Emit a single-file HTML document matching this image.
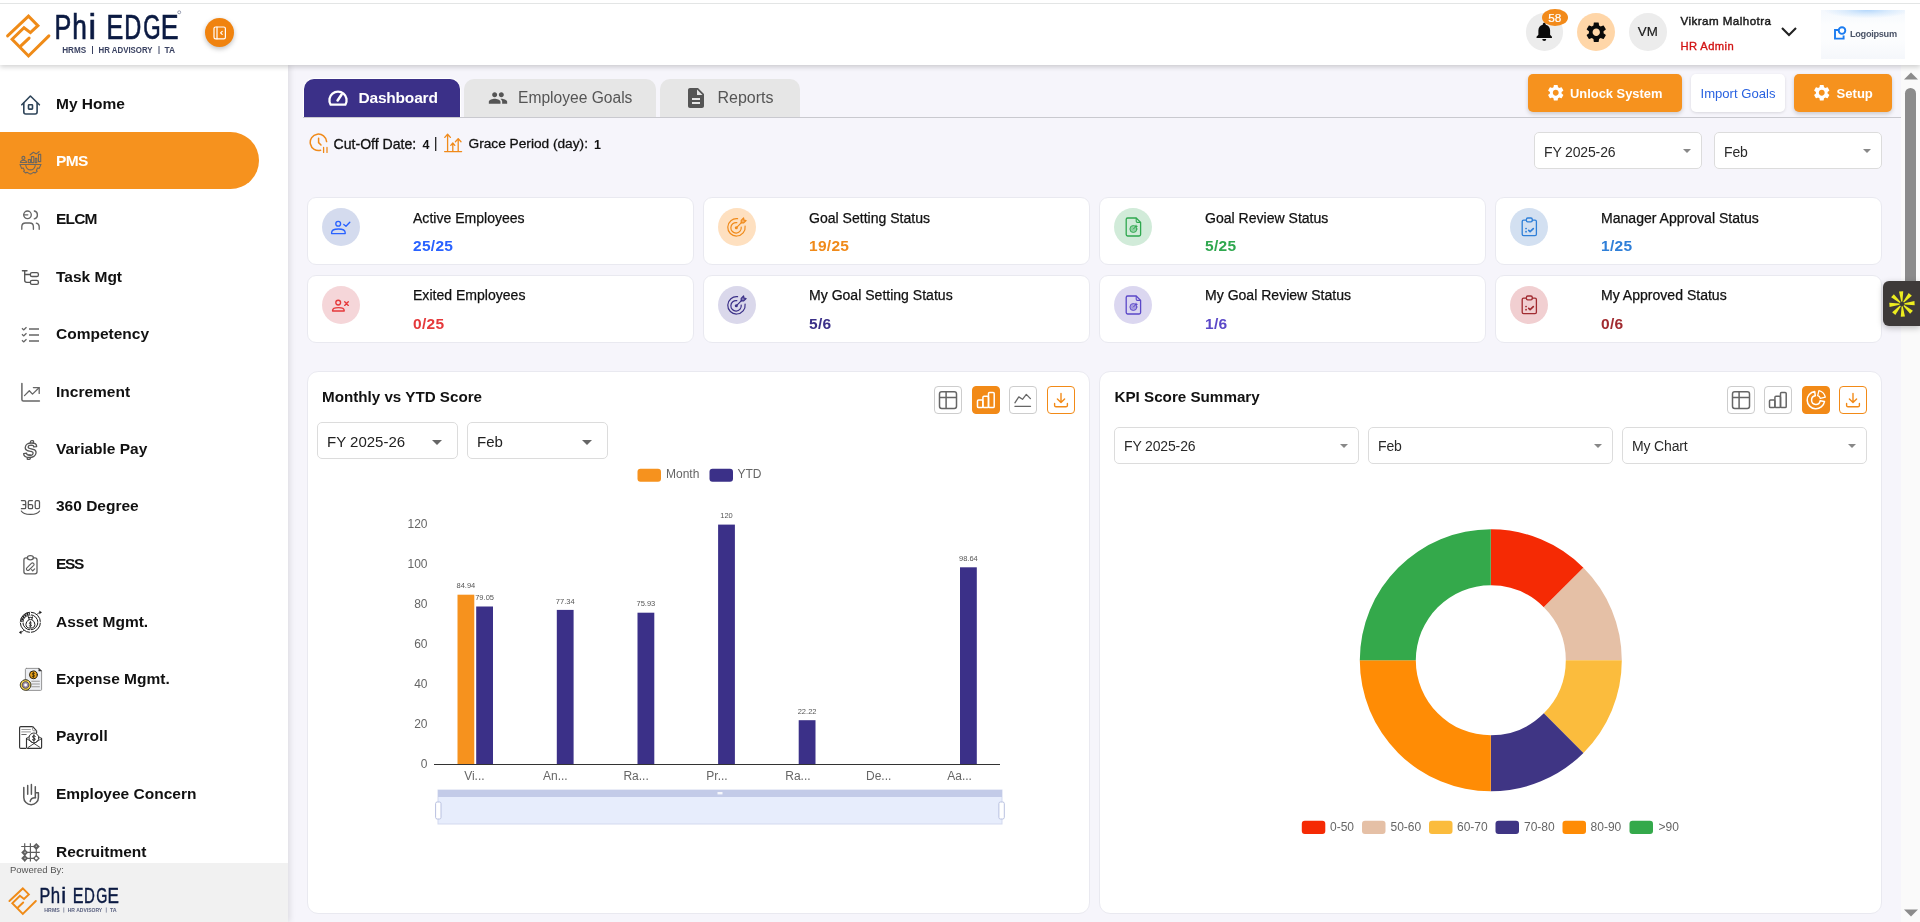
<!DOCTYPE html>
<html>
<head>
<meta charset="utf-8">
<title>PMS Dashboard</title>
<style>
*{box-sizing:border-box;margin:0;padding:0}
html,body{width:1920px;height:922px;overflow:hidden;background:#f6f5fb;font-family:"Liberation Sans",sans-serif;color:#111}
.abs{position:absolute}
#header,#sidebar,#main{will-change:transform}
#topline{position:absolute;left:0;top:3px;width:1920px;height:1px;background:#e3e5e5;z-index:30}
#header{position:absolute;left:0;top:0;width:1920px;height:65px;background:#fff;box-shadow:0 2px 5px rgba(0,0,0,.18);z-index:20}
#sidebar{position:absolute;left:0;top:65px;width:288px;height:857px;background:#fff;box-shadow:2px 0 6px rgba(0,0,0,.10);z-index:10;overflow:hidden}
.mi{position:absolute;left:0;width:288px;height:57px;font-weight:bold;font-size:15.5px;color:#111}
.mi span{position:absolute;left:56px;top:20px;line-height:18px;white-space:nowrap}
.mi svg{position:absolute;left:19px;top:17px;width:24px;height:24px}
.mi.act{background:#f6921e;width:259px;border-radius:0 29px 29px 0;color:#fff}
#powered{position:absolute;left:0;top:798px;width:288px;height:60px;background:#f1f1f1;z-index:5}
#main{position:absolute;left:0;top:0;width:1920px;height:922px;z-index:1}
.tab{position:absolute;top:79px;height:38px;border-radius:10px 10px 0 0;background:#e6e6e6;color:#555;font-size:16px;line-height:38px;white-space:nowrap}
.tab span{position:absolute;top:0}
.card{position:absolute;width:387px;height:68px;background:#fff;border:1px solid #e9e9f0;border-radius:9px}
.card .ic{position:absolute;left:13.6px;top:9.6px;width:38px;height:38px;border-radius:50%}
.card .ic svg{position:absolute;left:7px;top:7px;width:24px;height:24px}
.card.r1 .t{top:11px}
.card .t{position:absolute;left:105px;top:10px;font-size:14.05px;line-height:18px;color:#111;white-space:nowrap;-webkit-text-stroke:.25px #111}
.card .v{position:absolute;left:105px;top:39px;font-size:15.5px;letter-spacing:.3px;line-height:18px;font-weight:bold;white-space:nowrap}
.panel{position:absolute;top:371px;height:543px;background:#fff;border:1px solid #e9e9f0;border-radius:11px}
.ptitle{position:absolute;font-size:15.2px;font-weight:bold;color:#111;line-height:20px;white-space:nowrap}
.tb{position:absolute;width:28px;height:28px;border:1px solid #cdcdcd;border-radius:4px;background:#fff}
.tb svg{position:absolute;left:3px;top:3px;width:20px;height:20px}
.sel{position:absolute;height:36px;border:1px solid #dcdcdc;border-radius:5px;background:#fff;font-size:14px;letter-spacing:-.15px;line-height:34px;color:#2a2a2a;padding-left:9px;padding-top:.5px;white-space:nowrap}
.sel:after{content:"";position:absolute;right:10px;top:16px;border-left:4px solid transparent;border-right:4px solid transparent;border-top:4.5px solid #888}
.sel.s2{font-size:15px;color:#222;letter-spacing:0;padding-left:9px;padding-top:0}
.sel.s2:after{right:15px;top:16.500px;border-top-color:#666;border-left-width:5px;border-right-width:5px;border-top-width:5.5px}
.btn{position:absolute;top:74px;height:38px;border-radius:5px;background:#f6921e;color:#fff;font-size:12.9px;font-weight:bold;line-height:40px;white-space:nowrap;box-shadow:0 2px 4px rgba(0,0,0,.18)}
</style>
</head>
<body>
<div id="topline"></div>
<div id="header">

<svg class="abs" style="left:0;top:0" width="200" height="65" viewBox="0 0 200 65">
  <g fill="none" stroke="#ef8b18" stroke-width="3" stroke-linecap="round" stroke-linejoin="miter">
    <path d="M7.6 35.9 L28.5 16.2 L37.9 25.6 L30.4 32.6 L24 27.7 L12.1 39.3 L28.5 56 L48.9 35.9"/>
    <path d="M20.9 45.9 L29.1 38.1"/>
  </g>
  <g font-family="Liberation Sans, sans-serif" fill="#0b1a42">
    <g stroke="#0b1a42" stroke-width=".7">
    <text x="54.6" y="38.6" font-size="34.5" textLength="16.8" lengthAdjust="spacingAndGlyphs">P</text>
    <text x="72.2" y="38.6" font-size="34.5" textLength="14.6" lengthAdjust="spacingAndGlyphs">h</text>
    <text x="88.6" y="38.6" font-size="34.5" textLength="7.6" lengthAdjust="spacingAndGlyphs">i</text>
    <text x="106.6" y="38.6" font-size="34.5" textLength="16.8" lengthAdjust="spacingAndGlyphs">E</text>
    <text x="124.2" y="38.6" font-size="34.5" textLength="17" lengthAdjust="spacingAndGlyphs">D</text>
    <text x="143.2" y="38.6" font-size="34.5" textLength="17.4" lengthAdjust="spacingAndGlyphs">G</text>
    <text x="160.8" y="38.6" font-size="34.5" textLength="17.8" lengthAdjust="spacingAndGlyphs">E</text>
    </g>
    <g font-size="8.2" font-weight="bold" fill="#3a4262">
    <text x="62.2" y="52.8" textLength="24" lengthAdjust="spacingAndGlyphs">HRMS</text>
    <text x="98.6" y="52.8" textLength="54" lengthAdjust="spacingAndGlyphs">HR ADVISORY</text>
    <text x="164.6" y="52.8" textLength="10.6" lengthAdjust="spacingAndGlyphs">TA</text>
    </g>
    <path d="M92.5 46 V54 M159 46 V54" stroke="#3a4262" stroke-width="1" fill="none"/>
  </g>
  <circle cx="179.2" cy="12.3" r="1.5" fill="none" stroke="#3a4468" stroke-width=".5"/>
</svg>
<div class="abs" style="left:204.5px;top:17.5px;width:29px;height:29px;border-radius:50%;background:#f0830f;box-shadow:0 2px 5px rgba(0,0,0,.25)">
  <svg class="abs" style="left:0;top:0" width="29" height="29" viewBox="0 0 29 29" fill="none" stroke="#fff" stroke-width="1.2" stroke-linecap="round" stroke-linejoin="round">
    <rect x="9" y="9" width="11.4" height="11.8" rx="1.6"/>
    <path d="M12 9 V20.8"/>
    <path d="M17.2 13.4 L15.6 14.9 L17.2 16.4"/>
  </svg>
</div>
<!-- right side -->
<div class="abs" style="left:1525.8px;top:13.2px;width:37.5px;height:37.5px;border-radius:50%;background:#ececec">
  <svg class="abs" style="left:10.700px;top:9px" width="16.500" height="20.200" viewBox="0 0 18 22"><path fill="#0a0a0a" d="M9 0.8c-.9 0-1.6.7-1.6 1.6v.6C4.4 3.7 2.6 6.2 2.6 9.2v4.6L.6 16.2v1.2h16.8v-1.2l-2-2.4V9.2c0-3-1.8-5.5-4.8-6.2v-.6c0-.9-.7-1.6-1.6-1.6zM6.8 18.6a2.2 2.2 0 0 0 4.4 0z"/></svg>
</div>
<div class="abs" style="left:1541.8px;top:9px;width:26px;height:17px;border-radius:50%;background:#f28a1a;color:#fff;font-size:11.8px;line-height:19px;-webkit-text-stroke:.2px #fff;text-align:center">58</div>
<div class="abs" style="left:1577px;top:13px;width:38px;height:38px;border-radius:50%;background:#ffd6a8">
  <svg class="abs" style="left:6.75px;top:6.75px" width="24.5" height="24.5" viewBox="0 0 24 24"><path fill="#0a0a0a" d="M19.14 12.94c.04-.3.06-.61.06-.94 0-.32-.02-.64-.07-.94l2.03-1.58a.49.49 0 0 0 .12-.61l-1.92-3.32a.488.488 0 0 0-.59-.22l-2.39.96c-.5-.38-1.03-.7-1.62-.94l-.36-2.54a.484.484 0 0 0-.48-.41h-3.84c-.24 0-.43.17-.47.41l-.36 2.54c-.59.24-1.13.57-1.62.94l-2.39-.96c-.22-.08-.47 0-.59.22L2.74 8.87c-.12.21-.08.47.12.61l2.03 1.58c-.05.3-.09.63-.09.94s.02.64.07.94l-2.03 1.58a.49.49 0 0 0-.12.61l1.92 3.32c.12.22.37.29.59.22l2.39-.96c.5.38 1.03.7 1.62.94l.36 2.54c.05.24.24.41.48.41h3.84c.24 0 .44-.17.47-.41l.36-2.54c.59-.24 1.13-.56 1.62-.94l2.39.96c.22.08.47 0 .59-.22l1.92-3.32c.12-.22.07-.47-.12-.61l-2.01-1.58zM12 15.6c-1.98 0-3.6-1.62-3.6-3.6s1.620-3.6 3.600-3.6 3.600 1.620 3.600 3.600-1.620 3.600-3.600 3.600z"/></svg>
</div>
<div class="abs" style="left:1629px;top:13px;width:37.500px;height:37.500px;border-radius:50%;background:#ececec;color:#1c1c1c;font-size:13.3px;line-height:37.500px;-webkit-text-stroke:.2px #1c1c1c;text-align:center">VM</div>
<div class="abs nm" style="left:1680.5px;top:12.5px;font-size:11.6px;line-height:16px;color:#1a1a1a;white-space:nowrap;letter-spacing:.45px;-webkit-text-stroke:.45px #1a1a1a">Vikram Malhotra</div>
<div class="abs nm" style="left:1680.5px;top:37.5px;font-size:11.2px;line-height:16px;color:#d21414;white-space:nowrap;-webkit-text-stroke:.35px #d21414;letter-spacing:.4px">HR Admin</div>
<svg class="abs" style="left:1780px;top:25px" width="18" height="14" viewBox="0 0 18 14" fill="none" stroke="#222" stroke-width="2.1"><path d="M2 3 L9 10 L16 3"/></svg>
<div class="abs" style="left:1821px;top:10px;width:84px;height:49px;background:radial-gradient(ellipse 52% 17% at 55% 0%,#b4d7fb 0%,rgba(200,226,252,.6) 50%,rgba(240,247,254,0) 100%),linear-gradient(180deg,#f4f8fd 0%,#fcfdfe 30%,#fcfdfe 60%,#f5f7fb 100%)">
  <svg class="abs" style="left:12px;top:16px" width="14" height="15" viewBox="0 0 14 15" fill="none" stroke="#1b7cf0" stroke-width="1.9"><path d="M5.500 4 H2 V12.600 H10.600 V9.600"/><circle cx="9" cy="4.600" r="3.300" fill="#fff"/></svg>
  <div class="abs" style="left:29px;top:17.500px;font-size:9.2px;font-weight:bold;color:#4b5468;line-height:12px;letter-spacing:-.3px">Logoipsum</div>
</div>

</div>
<div id="sidebar">
<div class="mi" style="top:9.5px"><span>My Home</span></div>
<div class="mi act" style="top:67.0px"><span style="letter-spacing:-.6px">PMS</span></div>
<div class="mi" style="top:124.5px"><span style="letter-spacing:-.8px">ELCM</span></div>
<div class="mi" style="top:182.0px"><span style="top:21px">Task Mgt</span></div>
<div class="mi" style="top:239.5px"><span>Competency</span></div>
<div class="mi" style="top:297.0px"><span style="top:21px">Increment</span></div>
<div class="mi" style="top:354.5px"><span>Variable Pay</span></div>
<div class="mi" style="top:412.0px"><span>360 Degree</span></div>
<div class="mi" style="top:469.5px"><span style="letter-spacing:-1.3px">ESS</span></div>
<div class="mi" style="top:527.0px"><span style="top:21px">Asset Mgmt.</span></div>
<div class="mi" style="top:584.5px"><span>Expense Mgmt.</span></div>
<div class="mi" style="top:642.0px"><span>Payroll</span></div>
<div class="mi" style="top:699.5px"><span>Employee Concern</span></div>
<div class="mi" style="top:757.0px"><span style="top:21px">Recruitment</span></div>

<svg class="abs" style="left:0;top:0;z-index:3" width="60" height="857" viewBox="0 65 60 857" fill="none" stroke-linecap="round" stroke-linejoin="round">
<!-- home -->
<g stroke="#2e4459" stroke-width="1.6">
  <path d="M21.8 104.8 L30.4 96 L39.4 104.8"/>
  <path d="M23.8 103 V112 Q23.8 114 25.8 114 H35.1 Q37.1 114 37.1 112 V103"/>
  <rect x="28.5" y="104.7" width="4" height="4.4" rx=".6"/>
</g>
<!-- pms -->
<g stroke="#6d675f" stroke-width="1.1">
  <path d="M20 164.5 H41"/>
  <path d="M20.3 165.2 L21.6 168.4 L23.3 168 L24.4 170.4 L23.6 171.4 L25.8 173 L27 172.2 L29 173.4 L30.4 174 L31.8 173.4 L33.8 172.2 L35 173 L37.2 171.4 L36.4 170.4 L37.5 168 L39.2 168.4 L40.6 165.2"/>
  <path d="M25.8 165.2 A4.7 4.7 0 0 0 35.2 165.2"/>
  <circle cx="23.4" cy="157.9" r="1.5"/>
  <path d="M20.4 162.5 Q20.6 160.2 23.4 160.2 Q26.4 160.2 26.6 162.5 Z"/>
  <rect x="28.3" y="159.6" width="2.2" height="3"/>
  <rect x="31.4" y="156.6" width="2.4" height="6"/>
  <rect x="35.2" y="158.4" width="1.6" height="4.2"/>
  <rect x="38.5" y="154.4" width="2.2" height="7.2"/>
  <path d="M30 155 L33.4 152.3 L36.3 153.9 L39.1 151.7"/>
</g>
<!-- elcm -->
<g stroke="#666" stroke-width="1.35">
  <circle cx="27.5" cy="214.8" r="3.8"/>
  <path d="M23.7 214.8 H27.8"/>
  <path d="M34.3 211 A4 4 0 0 1 34.3 218.8"/>
  <path d="M21.8 229.2 V226.8 Q21.8 223 25.6 223 H29.6 Q33.4 223 33.4 226.8 V229.2"/>
  <path d="M36.3 223.1 Q39.2 223.8 39.2 226.8 V229.2"/>
</g>
<!-- task -->
<g stroke="#555" stroke-width="1.35">
  <path d="M22.4 270.7 H27"/>
  <path d="M24.7 270.7 V280.2 Q24.7 282.3 26.8 282.3 H30.3"/>
  <path d="M24.7 274.5 H30.3"/>
  <rect x="30.4" y="272.6" width="8" height="3.9" rx="1.6"/>
  <rect x="30.4" y="280.4" width="8" height="3.9" rx="1.6"/>
</g>
<!-- competency -->
<g stroke="#666" stroke-width="1.5" stroke-linecap="butt">
  <path d="M29 329 H39 M29 335 H39 M29 341 H39"/>
  <path d="M22 328.2 L23.6 329.9 L26.5 327.2 M22 334.2 L23.6 335.9 L26.5 333.2 M22 340.2 L23.6 341.9 L26.5 339.2" stroke-width="1.3"/>
</g>
<!-- increment -->
<g stroke="#666" stroke-width="1.5">
  <path d="M21.9 383.6 V399.6 Q21.9 401.1 23.4 401.1 H39.4"/>
  <path d="M24.5 395.6 L29.3 390.7 L32.5 394.1 L39 387.8" stroke-width="1.3"/>
  <path d="M33.4 387.6 H39.2 V393.4" stroke-width="1.3"/>
</g>
<!-- variable pay -->
<g transform="translate(30.4 450) skewX(-9) translate(-30.4 -450)" stroke="#555" stroke-width="1.3" fill="#fff" stroke-linejoin="round">
 <rect x="29.2" y="440.6" width="3" height="4.400" rx=".9"/>
 <rect x="28.600" y="455" width="3" height="4.400" rx=".9"/>
 <path transform="translate(23.6 457.3) scale(0.010010 -0.010010)" stroke-width="129.9" d="M1286 406Q1286 199 1132.5 89.5Q979 -20 682 -20Q411 -20 257.0 76.0Q103 172 59 367L344 414Q373 302 457.0 251.5Q541 201 690 201Q999 201 999 389Q999 449 963.5 488.0Q928 527 863.5 553.0Q799 579 616 616Q458 653 396.0 675.5Q334 698 284.0 728.5Q234 759 199.0 802.0Q164 845 144.5 903.0Q125 961 125 1036Q125 1227 268.5 1328.5Q412 1430 686 1430Q948 1430 1079.5 1348.0Q1211 1266 1249 1077L963 1038Q941 1129 873.5 1175.0Q806 1221 680 1221Q412 1221 412 1053Q412 998 440.5 963.0Q469 928 525.0 903.5Q581 879 752 842Q955 799 1042.5 762.5Q1130 726 1181.0 677.5Q1232 629 1259.0 561.5Q1286 494 1286 406Z"/>
</g>
<!-- 360 -->
<g stroke="#555" stroke-width="1.25">
  <path d="M21.4 500.6 H24.4 Q25.7 500.6 25.7 501.9 V507.4 Q25.7 508.7 24.4 508.7 H21.4 M23 504.5 H25.7"/>
  <path d="M32.4 500.6 H29.6 Q28.3 500.6 28.3 501.9 V507.4 Q28.3 508.7 29.6 508.7 H31.3 Q32.6 508.7 32.6 507.4 V505.6 Q32.6 504.5 31.3 504.5 H28.3"/>
  <rect x="35.2" y="500.6" width="4.3" height="8.1" rx="1.5"/>
  <path d="M21.3 511 Q23 514.4 30.4 514.4 Q37.8 514.4 39.6 511" stroke-width="1.1"/>
</g>
<!-- ess -->
<g stroke="#5e5e5e" stroke-width="1.3">
  <path d="M27.4 557.9 H26 Q23.9 557.9 23.9 560 V571.8 Q23.9 573.9 26 573.9 H34.9 Q37 573.9 37 571.8 V560 Q37 557.9 34.9 557.9 H33.4"/>
  <ellipse cx="30.4" cy="557.8" rx="3" ry="2.1"/>
  <path d="M26.9 567.9 L31.6 563.2 A1.5 1.5 0 0 1 33.7 565.3 L29 570 Q28 571 26.9 570 Q25.9 569 26.9 567.9 Z" stroke-width="1.1"/>
  <path d="M31.6 569.7 L32.6 571 L34.7 568.8" stroke-width="1.1"/>
</g>
<!-- asset -->
<g stroke="#1c1c1c" stroke-width="1">
  <circle cx="30.4" cy="622.3" r="10.1"/>
  <circle cx="30.4" cy="622.3" r="7.5"/>
  <path d="M21.6 622.2 A8.8 8.8 0 0 1 30.2 613.500" stroke-width="2" stroke-linecap="butt" stroke-dasharray="1.700 .7"/>
  <path d="M30.4 611.600 V615.200 M30.4 629.400 V633 M19.800 622.300 H23.300 M37.500 622.300 H41" stroke="#fff" stroke-width="1.100" stroke-linecap="butt"/>
  <path d="M28.300 616.700 L29.400 618 L30.400 616.900 L31.400 618 L32.500 616.700 L31.800 619.600 Q34.900 621.400 34.900 624.400 Q34.900 628.100 30.400 628.100 Q25.900 628.100 25.900 624.400 Q25.900 621.400 29 619.600 Z" fill="#fff"/>
  <path d="M29 619.700 H31.800" stroke-width=".8"/>
  <path d="M37 614.400 Q38 612.600 40.200 612.400 M23.800 630.400 Q22.800 632.200 20.600 632.400" stroke-width=".8"/>
  <path d="M39.800 611.200 L41.600 612.400 L39.800 613.600 Z M21 631.200 L19.200 632.400 L21 633.600 Z" fill="#1c1c1c" stroke-width=".5"/>
  <path d="M31.500 622.900 Q30.400 621.900 29.400 622.800 Q28.900 623.800 30.400 624.300 Q31.900 624.800 31.400 625.800 Q30.400 626.800 29.200 625.800 M30.400 621.400 V627.300" stroke-width=".8" fill="none"/>
</g>
<!-- expense -->
<g stroke-width=".9">
  <path d="M26.4 668.4 H39 L41.6 671 V689.4 Q41.6 690.4 40.6 690.4 H26.4 Q25.4 690.4 25.4 689.4 V669.4 Q25.4 668.4 26.4 668.4 Z" fill="#eceef2" stroke="#8a8a8a"/>
  <path d="M39 668.4 L41.6 671 H39 Z" fill="#333" stroke="#333" stroke-width=".5"/>
  <path d="M31.4 681.3 H39.8 M31.4 684 H39.8 M31.4 686.8 H39.8" stroke="#9a9a9a" stroke-width="1.1" stroke-linecap="butt"/>
  <circle cx="33.4" cy="674.8" r="3.9" fill="#e9a21b" stroke="#2a2110" stroke-width="1"/>
  <circle cx="25.6" cy="685" r="5.3" fill="#f3d44f" stroke="#2b2614" stroke-width="1" stroke-dasharray="2.2 .9"/>
  <circle cx="25.6" cy="685" r="3.3" fill="#9c8ea6" stroke="#3a3340" stroke-width=".8" stroke-dasharray="1.6 .8"/>
  <circle cx="25.6" cy="685" r="1.4" fill="#fff" stroke="none"/>
</g>
<path d="M34.500 673.500 Q33.400 672.600 32.400 673.400 Q31.900 674.400 33.400 674.900 Q34.900 675.400 34.400 676.300 Q33.400 677.200 32.200 676.300 M33.400 672.200 V677.500" stroke="#3a2a08" stroke-width=".9" fill="none"/>
<!-- payroll -->
<g stroke="#333" stroke-width="1.15">
  <path d="M25.6 748.4 H20.8 Q19.6 748.4 19.6 747.2 V727.8 Q19.6 726.6 20.8 726.6 H32.8 L36.6 730.8 V733"/>
  <path d="M32.6 726.8 V729.6 Q32.6 730.8 33.8 730.8 H36.4" stroke-width=".9" stroke="#888"/>
  <path d="M21.8 729.5 H30.4" stroke="#888" stroke-width=".8"/>
  <path d="M21.8 731.9 H30.4" stroke="#aaa" stroke-width="1.3"/>
  <path d="M21.8 734.5 H26.2" stroke="#555" stroke-width=".9"/>
  <path d="M26.5 738.4 V747.2 Q26.5 748.4 27.7 748.4 H40.4 Q41.6 748.4 41.6 747.2 V738.4" />
  <circle cx="33.9" cy="737.9" r="4.9" stroke-width="1"/>
  <path d="M26.6 738.6 L40 747.4 M41.5 738.6 L28.2 747.4" stroke-width=".9"/>
  <path d="M26.5 738.4 L29 736.8 M41.6 738.4 L38.9 736.8" stroke-width=".9"/>
</g>
<path d="M35.300 736.300 Q33.900 735.200 32.700 736.200 Q32.100 737.400 33.900 738 Q35.700 738.600 35.100 739.800 Q33.900 740.900 32.400 739.800 M33.900 734.700 V741.300" stroke="#222" stroke-width="1" fill="none"/>
<!-- hand -->
<g stroke="#5a5a5a" stroke-width="1.5">
  <path d="M23.8 787.6 V797.4 A7.3 7.3 0 0 0 38.4 797.4 V792.8 H36"/>
  <path d="M27.7 785.6 V794.2 M31.4 784.6 V794.2 M35.3 786.7 V797.6"/>
  <path d="M35.6 797.8 Q30.8 797.6 30.2 801.4"/>
</g>
<!-- recruitment -->
<g stroke="#5e5e5e" stroke-width="1.2" stroke-linecap="butt">
  <path d="M21.2 846.5 H36 M24.7 852.4 H39.8 M24.7 858.3 H36.3"/>
  <path d="M24.7 843.2 V861.6 M30.4 843.2 V861.6 M36.3 846.5 V858.3"/>
  <g fill="#5e5e5e" stroke="none">
    <path d="M36.3 843 L39.8 846.5 L36.3 850 L32.8 846.5 Z"/>
    <path d="M24.7 848.9 L28.2 852.4 L24.7 855.9 L21.2 852.4 Z"/>
    <path d="M24.7 854.8 L28.2 858.3 L24.7 861.8 L21.2 858.3 Z"/>
    <path d="M36.3 854.8 L39.8 858.3 L36.3 861.8 L32.8 858.3 Z"/>
  </g>
  <circle cx="36.3" cy="858.3" r="1.3" fill="#fff" stroke="none"/>
  <circle cx="36.3" cy="846.3" r=".8" fill="#bbb" stroke="none"/>
  <circle cx="25" cy="852.4" r=".8" fill="#bbb" stroke="none"/>
  <circle cx="25" cy="858.3" r=".8" fill="#bbb" stroke="none"/>
</g>
</svg>

<div id="powered">
  <div class="abs" style="left:10px;top:.5px;font-size:9.5px;line-height:12px;color:#555">Powered By:</div>
  <svg class="abs" style="left:0;top:0" width="140" height="60" viewBox="0 0 140 60">
  <g transform="translate(4.56 15.06) scale(.64)">
  <g fill="none" stroke="#ef8b18" stroke-width="3" stroke-linecap="round" stroke-linejoin="miter">
    <path d="M7.6 35.9 L28.5 16.2 L37.9 25.6 L30.4 32.6 L24 27.7 L12.1 39.3 L28.5 56 L48.9 35.9"/>
    <path d="M20.9 45.9 L29.1 38.1"/>
  </g>
  <g font-family="Liberation Sans, sans-serif" fill="#0b1a42">
    <g stroke="#0b1a42" stroke-width=".7">
    <text x="54.6" y="38.6" font-size="34.5" textLength="16.8" lengthAdjust="spacingAndGlyphs">P</text>
    <text x="72.2" y="38.6" font-size="34.5" textLength="14.6" lengthAdjust="spacingAndGlyphs">h</text>
    <text x="88.6" y="38.6" font-size="34.5" textLength="7.6" lengthAdjust="spacingAndGlyphs">i</text>
    <text x="106.6" y="38.6" font-size="34.5" textLength="16.8" lengthAdjust="spacingAndGlyphs">E</text>
    <text x="124.2" y="38.6" font-size="34.5" textLength="17" lengthAdjust="spacingAndGlyphs">D</text>
    <text x="143.2" y="38.6" font-size="34.5" textLength="17.4" lengthAdjust="spacingAndGlyphs">G</text>
    <text x="160.8" y="38.6" font-size="34.5" textLength="17.8" lengthAdjust="spacingAndGlyphs">E</text>
    </g>
    <g font-size="8.2" font-weight="bold" fill="#5a6180">
    <text x="62.2" y="52.8" textLength="24" lengthAdjust="spacingAndGlyphs">HRMS</text>
    <text x="98.6" y="52.8" textLength="54" lengthAdjust="spacingAndGlyphs">HR ADVISORY</text>
    <text x="164.6" y="52.8" textLength="10.6" lengthAdjust="spacingAndGlyphs">TA</text>
    </g>
    <path d="M92.5 46 V54 M159 46 V54" stroke="#5a6180" stroke-width="1" fill="none"/>
  </g>
  </g>
  </svg>
</div>

</div>
<div id="main">

<!-- tabs -->
<div class="abs" style="left:303px;top:117px;width:1598px;height:1px;background:#c9c9cf"></div>
<div class="tab" style="left:303px;top:78px;width:158px;height:39px;border:1px solid #fff;border-bottom:none;border-radius:11px 11px 0 0;background:#3b3088;color:#fff;font-weight:bold">
  <svg class="abs" style="left:23px;top:10px" width="22" height="18" viewBox="0 0 22 18" fill="none" stroke="#fff" stroke-width="2.3" stroke-linecap="round"><path d="M3.6 15.6 A8.6 8.6 0 1 1 18.4 15.6 Z" stroke-linejoin="round"/><path d="M10.6 11.4 L14.6 5.6" stroke-width="2.6"/></svg>
  <span style="left:54.5px;font-size:15.5px;letter-spacing:-.2px">Dashboard</span>
</div>
<div class="tab" style="left:464px;width:192px">
  <svg class="abs" style="left:22px;top:9px" width="24" height="20" viewBox="0 0 24 24"><path fill="#555" d="M16 11c1.660 0 2.990-1.340 2.990-3S17.660 5 16 5c-1.660 0-3 1.340-3 3s1.340 3 3 3zm-8 0c1.660 0 2.990-1.340 2.990-3S9.660 5 8 5C6.340 5 5 6.340 5 8s1.340 3 3 3zm0 2c-2.330 0-7 1.170-7 3.500V19h14v-2.500c0-2.330-4.670-3.500-7-3.500zm8 0c-.29 0-.62.020-.97.050 1.160.84 1.970 1.970 1.970 3.450V19h6v-2.500c0-2.330-4.670-3.500-7-3.500z"/></svg>
  <span style="left:54px;font-size:15.6px">Employee Goals</span>
</div>
<div class="tab" style="left:660px;width:140px">
  <svg class="abs" style="left:24px;top:7px" width="24" height="24" viewBox="0 0 24 24"><path fill="#555" d="M14 2H6c-1.100 0-1.990.900-1.990 2L4 20c0 1.100.890 2 1.990 2H18c1.100 0 2-.900 2-2V8l-6-6zm2 16H8v-2h8v2zm0-4H8v-2h8v2zm-3-5V3.500L18.500 9H13z"/></svg>
  <span style="left:57.5px">Reports</span>
</div>
<!-- buttons -->
<div class="btn" style="left:1528px;width:154px">
  <svg class="abs" style="left:17.5px;top:9px" width="19.500" height="19.500" viewBox="0 0 24 24"><path fill="#fff" d="M19.14 12.94c.04-.3.06-.61.06-.94 0-.32-.02-.64-.07-.94l2.03-1.58a.49.49 0 0 0 .12-.61l-1.92-3.32a.488.488 0 0 0-.59-.22l-2.39.96c-.5-.38-1.03-.7-1.62-.94l-.36-2.54a.484.484 0 0 0-.48-.41h-3.84c-.24 0-.43.17-.47.41l-.36 2.54c-.59.24-1.13.57-1.620.94l-2.39-.96c-.22-.08-.47 0-.59.22L2.740 8.870c-.12.21-.08.47.12.61l2.030 1.580c-.05.3-.09.63-.09.94s.02.64.07.94l-2.030 1.580a.49.49 0 0 0-.12.610l1.920 3.320c.12.220.37.290.59.220l2.390-.96c.5.380 1.030.700 1.620.940l.36 2.540c.05.240.24.410.48.410h3.840c.24 0 .44-.17.47-.41l.36-2.540c.59-.24 1.130-.56 1.620-.94l2.390.96c.22.080.47 0 .59-.22l1.920-3.320c.12-.22.070-.47-.12-.61l-2.010-1.580zM12 15.600c-1.980 0-3.600-1.620-3.600-3.600s1.620-3.600 3.600-3.600 3.600 1.620 3.600 3.600-1.620 3.600-3.600 3.600z"/></svg>
  <span class="abs" style="left:42px;top:0">Unlock System</span>
</div>
<div class="btn" style="left:1691px;width:94px;background:#fff;color:#2962e0;font-weight:normal;font-size:13.1px;box-shadow:0 1px 3px rgba(0,0,0,.12)"><span class="abs" style="left:9.5px;top:0">Import Goals</span></div>
<div class="btn" style="left:1794px;width:98px">
  <svg class="abs" style="left:17.5px;top:9px" width="19.500" height="19.500" viewBox="0 0 24 24"><path fill="#fff" d="M19.14 12.94c.04-.3.06-.61.06-.94 0-.32-.02-.64-.07-.94l2.03-1.58a.49.49 0 0 0 .12-.61l-1.92-3.32a.488.488 0 0 0-.59-.22l-2.39.96c-.5-.38-1.03-.7-1.62-.94l-.36-2.54a.484.484 0 0 0-.48-.41h-3.84c-.24 0-.43.17-.47.41l-.36 2.54c-.59.24-1.13.57-1.620.94l-2.39-.96c-.22-.08-.47 0-.59.22L2.740 8.870c-.12.21-.08.47.12.61l2.030 1.580c-.05.3-.09.63-.09.94s.02.64.07.94l-2.030 1.580a.49.49 0 0 0-.12.610l1.920 3.320c.12.220.37.290.59.220l2.390-.96c.5.380 1.030.700 1.620.940l.36 2.540c.05.240.24.410.48.410h3.840c.24 0 .44-.17.47-.41l.36-2.540c.59-.24 1.130-.56 1.620-.94l2.390.96c.22.080.47 0 .59-.22l1.920-3.320c.12-.22.070-.47-.12-.61l-2.010-1.580zM12 15.600c-1.980 0-3.600-1.620-3.600-3.600s1.620-3.600 3.600-3.600 3.600 1.620 3.600 3.600-1.620 3.600-3.600 3.600z"/></svg>
  <span class="abs" style="left:42.5px;top:0;font-size:13.1px">Setup</span>
</div>
<!-- cutoff line -->
<svg class="abs" style="left:308.500px;top:132.500px" width="22" height="22" viewBox="0 0 22 22" fill="none" stroke="#f08a1a" stroke-width="1.5" stroke-linecap="round"><path d="M11.6 17.2 A8.2 8.2 0 1 1 17.6 8.6"/><path d="M9.6 5.2 V9.6 L12 12"/><path d="M14.6 14.4 V19.4 M18 14.4 V19.4" stroke-width="1.3"/></svg>
<div class="abs" style="left:333.5px;top:135px;font-size:14.1px;line-height:18px;color:#111;white-space:nowrap;-webkit-text-stroke:.3px #111">Cut-Off Date:</div>
<div class="abs" style="left:422.500px;top:135.500px;font-size:12.5px;line-height:18px;font-weight:bold;color:#111">4</div>
<div class="abs" style="left:433.7px;top:133.5px;font-size:15px;line-height:18px;color:#111">|</div>
<svg class="abs" style="left:443px;top:131.700px" width="20" height="21" viewBox="0 0 20 21" fill="none" stroke="#f08a1a" stroke-width="1.3" stroke-linecap="round" stroke-linejoin="round"><path d="M1.6 19.6 H18.6"/><path d="M4.6 19.4 V2.4 M1.8 5.4 L4.6 2.2 L7.4 5.4"/><path d="M9.8 19.4 V11.2 M7.8 13.4 L9.8 11 L11.8 13.4"/><path d="M15.2 19.4 V6.8 M12.4 9.8 L15.2 6.6 L18 9.8"/></svg>
<div class="abs" style="left:468.5px;top:135px;font-size:13.7px;line-height:18px;color:#111;white-space:nowrap;-webkit-text-stroke:.3px #111">Grace Period (day):</div>
<div class="abs" style="left:594px;top:135.500px;font-size:12.5px;line-height:18px;font-weight:bold;color:#111">1</div>
<!-- top selects -->
<div class="sel" style="left:1534px;top:132px;width:168px;height:37px;line-height:36px">FY 2025-26</div>
<div class="sel" style="left:1714px;top:132px;width:168px;height:37px;line-height:36px">Feb</div>
<div class="card r1" style="left:307px;top:197px"><div class="ic" style="background:#d4dbee"><svg viewBox="0 0 24 24"><g fill="none" stroke="#2962ff" stroke-width="1.35" stroke-linecap="round" stroke-linejoin="round"><circle cx="9.2" cy="8.7" r="2.4"/><path d="M2.6 18.6 V17.8 Q2.6 14 9.4 14 Q16.2 14 16.2 17.8 V18.6 Z"/><path d="M14.8 9.4 L17 11.3 L20.8 7.2"/></g></svg></div><div class="t">Active Employees</div><div class="v" style="color:#2962ff">25/25</div></div>
<div class="card r1" style="left:703px;top:197px"><div class="ic" style="background:#fee0c0"><svg viewBox="0 0 24 24"><g fill="none" stroke="#f08a1a" stroke-width="1.2" stroke-linecap="round" stroke-linejoin="round"><path d="M12.600 3.700 A8.700 8.700 0 1 0 20.100 11.200"/><path d="M11.800 7.700 A5.200 5.200 0 1 0 16.200 12.100"/><circle cx="11.300" cy="12.800" r="1.500" fill="#f08a1a" stroke="none"/><path d="M11.300 12.800 L16.400 7.700"/><path d="M16.200 7.900 V5.400 L18.600 3 L19 5.100 L21.100 5.500 L18.700 7.900 Z" fill="#f08a1a" fill-opacity=".55"/></g></svg></div><div class="t">Goal Setting Status</div><div class="v" style="color:#f08a1a">19/25</div></div>
<div class="card r1" style="left:1099px;top:197px"><div class="ic" style="background:#d1ebd9"><svg viewBox="0 0 24 24"><g fill="none" stroke="#2fa84f" stroke-width="1.3" stroke-linecap="round" stroke-linejoin="round"><path d="M6.600 3 H15.200 L19.600 7.400 V19.600 Q19.600 21 18.200 21 H6.600 Q5.200 21 5.200 19.600 V4.400 Q5.200 3 6.600 3 Z"/><path d="M15.200 3.200 V6.200 Q15.200 7.400 16.400 7.400 H19.400" stroke-width="1.100"/><circle cx="12.400" cy="14" r="3.500" fill="#2fa84f" fill-opacity=".4" stroke-width=".9"/><path d="M12.400 14 L15 11.400 M15 11.400 V10.200 M15 11.400 H16.200" stroke-width="1"/></g></svg></div><div class="t">Goal Review Status</div><div class="v" style="color:#2fa84f">5/25</div></div>
<div class="card r1" style="left:1495px;top:197px"><div class="ic" style="background:#d3e0f1"><svg viewBox="0 0 24 24"><g fill="none" stroke="#2f7fd8" stroke-width="1.3" stroke-linecap="round" stroke-linejoin="round"><path d="M9.400 5.200 H6.600 Q5.200 5.200 5.200 6.600 V19.200 Q5.200 20.600 6.600 20.600 H18 Q19.400 20.600 19.400 19.200 V6.600 Q19.400 5.200 18 5.200 H15.300"/><rect x="9.400" y="3" width="5.900" height="3.800" rx="1.400"/><path d="M9 13.500 H9.100 M9 16.700 H9.100" stroke-width="1.700"/><path d="M11.700 15.300 L13.100 16.600 L16.300 13.600" stroke-width="1.700"/></g></svg></div><div class="t">Manager Approval Status</div><div class="v" style="color:#2f7fd8">1/25</div></div>
<div class="card" style="left:307px;top:275px"><div class="ic" style="background:#f5d6d9"><svg viewBox="0 0 24 24"><g fill="none" stroke="#e5393b" stroke-width="1.35" stroke-linecap="round" stroke-linejoin="round"><circle cx="9.2" cy="9.6" r="2.400"/><path d="M3.600 18 V17.400 Q3.600 14.600 9.400 14.600 Q15.200 14.600 15.200 17.400 V18 Z"/><path d="M15.700 8.800 L19.300 12.400 M19.300 8.800 L15.700 12.400"/></g></svg></div><div class="t">Exited Employees</div><div class="v" style="color:#e5393b">0/25</div></div>
<div class="card" style="left:703px;top:275px"><div class="ic" style="background:#dad8eb"><svg viewBox="0 0 24 24"><g fill="none" stroke="#3b3088" stroke-width="1.2" stroke-linecap="round" stroke-linejoin="round"><path d="M12.600 3.700 A8.700 8.700 0 1 0 20.100 11.200"/><path d="M11.800 7.700 A5.200 5.200 0 1 0 16.200 12.100"/><circle cx="11.300" cy="12.800" r="1.500" fill="#3b3088" stroke="none"/><path d="M11.300 12.800 L16.400 7.700"/><path d="M16.200 7.900 V5.400 L18.600 3 L19 5.100 L21.100 5.500 L18.700 7.900 Z" fill="#3b3088" fill-opacity=".55"/></g></svg></div><div class="t">My Goal Setting Status</div><div class="v" style="color:#3b3088">5/6</div></div>
<div class="card" style="left:1099px;top:275px"><div class="ic" style="background:#dbd7f0"><svg viewBox="0 0 24 24"><g fill="none" stroke="#5b48c8" stroke-width="1.3" stroke-linecap="round" stroke-linejoin="round"><path d="M6.600 3 H15.200 L19.600 7.400 V19.600 Q19.600 21 18.200 21 H6.600 Q5.200 21 5.200 19.600 V4.400 Q5.200 3 6.600 3 Z"/><path d="M15.200 3.200 V6.200 Q15.200 7.400 16.400 7.400 H19.400" stroke-width="1.100"/><circle cx="12.400" cy="14" r="3.500" fill="#5b48c8" fill-opacity=".4" stroke-width=".9"/><path d="M12.400 14 L15 11.400 M15 11.400 V10.200 M15 11.400 H16.200" stroke-width="1"/></g></svg></div><div class="t">My Goal Review Status</div><div class="v" style="color:#5b48c8">1/6</div></div>
<div class="card" style="left:1495px;top:275px"><div class="ic" style="background:#f1cfd1"><svg viewBox="0 0 24 24"><g fill="none" stroke="#a12b30" stroke-width="1.3" stroke-linecap="round" stroke-linejoin="round"><path d="M9.400 5.200 H6.600 Q5.200 5.200 5.200 6.600 V19.200 Q5.200 20.600 6.600 20.600 H18 Q19.400 20.600 19.400 19.200 V6.600 Q19.400 5.200 18 5.200 H15.300"/><rect x="9.400" y="3" width="5.900" height="3.800" rx="1.400"/><path d="M9 13.500 H9.100 M9 16.700 H9.100" stroke-width="1.700"/><path d="M11.700 15.300 L13.100 16.600 L16.300 13.600" stroke-width="1.700"/></g></svg></div><div class="t">My Approved Status</div><div class="v" style="color:#a12b30">0/6</div></div>
<div class="panel" style="left:307px;width:783px"></div>
<div class="panel" style="left:1099px;width:783px"></div>
<div class="ptitle" style="left:322px;top:387px">Monthly vs YTD Score</div>
<div class="ptitle" style="left:1114.5px;top:387px">KPI Score Summary</div>
<div class="tb" style="left:934px;top:386px"><svg viewBox="0 0 20 20" fill="none" stroke="#666" stroke-width="1.5"><rect x="1.500" y="1.700" width="17" height="16.800" rx="2.200"/><path d="M1.500 7.500 H18.500 M8.100 1.700 V18.500"/></svg></div><div class="tb" style="left:972px;top:386px;background:#f28a17;border-color:#f28a17"><svg viewBox="0 0 20 20" fill="none" stroke="#fff" stroke-width="1.5" stroke-linejoin="round"><rect x="1.500" y="9.900" width="5.400" height="7.700" rx="1.100"/><rect x="6.900" y="6.300" width="5.600" height="11.300" rx="1.100"/><rect x="12.500" y="2.400" width="5.700" height="15.200" rx="1.100"/></svg></div><div class="tb" style="left:1009px;top:386px"><svg viewBox="0 0 20 20" fill="none" stroke="#666" stroke-width="1.3" stroke-linecap="round" stroke-linejoin="round"><path d="M1.900 16.300 H17.500"/><path d="M1.900 12.800 L5.800 6.900 L9.500 9.300 L13.300 4.400 L17.400 8.600"/></svg></div><div class="tb" style="left:1047px;top:386px;border-color:#f28a17"><svg viewBox="0 0 20 20" fill="none" stroke="#f28a17" stroke-width="1.4" stroke-linecap="round" stroke-linejoin="round"><path d="M10 3.4 V12.4 M6.4 9 L10 12.6 L13.6 9"/><path d="M3.6 13.4 V15.4 Q3.6 16.8 5 16.8 H15 Q16.4 16.8 16.4 15.4 V13.4"/></svg></div>
<div class="tb" style="left:1727px;top:386px"><svg viewBox="0 0 20 20" fill="none" stroke="#666" stroke-width="1.5"><rect x="1.500" y="1.700" width="17" height="16.800" rx="2.200"/><path d="M1.500 7.500 H18.500 M8.100 1.700 V18.500"/></svg></div><div class="tb" style="left:1764px;top:386px"><svg viewBox="0 0 20 20" fill="none" stroke="#666" stroke-width="1.5" stroke-linejoin="round"><rect x="1.500" y="9.900" width="5.400" height="7.700" rx="1.100"/><rect x="6.900" y="6.300" width="5.600" height="11.300" rx="1.100"/><rect x="12.500" y="2.400" width="5.700" height="15.200" rx="1.100"/></svg></div><div class="tb" style="left:1802px;top:386px;background:#f28a17;border-color:#f28a17"><svg viewBox="0 0 20 20" fill="none" stroke="#fff" stroke-width="1.500" stroke-linecap="round" stroke-linejoin="round"><path d="M8.69 1.48 A8.7 8.7 0 1 0 18.47 11.61 L14.13 10.85 A4.3 4.3 0 1 1 9.30 5.84 Z"/><path d="M11.67 5.71 L12.93 0.66 A8.8 8.8 0 0 1 19.34 7.07 L14.29 8.33 A3.6 3.6 0 0 0 11.67 5.71 Z" stroke-width="1.300"/></svg></div><div class="tb" style="left:1839px;top:386px;border-color:#f28a17"><svg viewBox="0 0 20 20" fill="none" stroke="#f28a17" stroke-width="1.4" stroke-linecap="round" stroke-linejoin="round"><path d="M10 3.4 V12.4 M6.4 9 L10 12.6 L13.6 9"/><path d="M3.6 13.4 V15.4 Q3.6 16.8 5 16.8 H15 Q16.4 16.8 16.4 15.4 V13.4"/></svg></div>
<div class="sel s2" style="left:317px;top:422px;width:141px;height:37px;line-height:38.500px">FY 2025-26</div>
<div class="sel s2" style="left:467px;top:422px;width:141px;height:37px;line-height:38.500px">Feb</div>
<div class="sel" style="left:1114px;top:427px;width:245px;height:37px;line-height:35px">FY 2025-26</div>
<div class="sel" style="left:1368px;top:427px;width:245px;height:37px;line-height:35px">Feb</div>
<div class="sel" style="left:1622px;top:427px;width:245px;height:37px;line-height:35px">My Chart</div>
<svg class="abs" style="left:308px;top:460px" width="782" height="450" viewBox="308 460 782 450" font-family="Liberation Sans, sans-serif">
<rect x="637.5" y="468.800" width="23.5" height="12.900" rx="3" fill="#f6921e"/><text x="666" y="478.300" font-size="12" fill="#666">Month</text>
<rect x="709.5" y="468.800" width="23.5" height="12.900" rx="3" fill="#3b3088"/><text x="737.5" y="478.300" font-size="12" fill="#666">YTD</text>
<text x="427.5" y="767.8" font-size="12" fill="#666" text-anchor="end">0</text>
<text x="427.5" y="727.8" font-size="12" fill="#666" text-anchor="end">20</text>
<text x="427.5" y="687.8" font-size="12" fill="#666" text-anchor="end">40</text>
<text x="427.5" y="647.8" font-size="12" fill="#666" text-anchor="end">60</text>
<text x="427.5" y="607.8" font-size="12" fill="#666" text-anchor="end">80</text>
<text x="427.5" y="567.8" font-size="12" fill="#666" text-anchor="end">100</text>
<text x="427.5" y="527.8" font-size="12" fill="#666" text-anchor="end">120</text>
<text x="474.4" y="780.4" font-size="12" fill="#666" text-anchor="middle">Vi...</text>
<rect x="476.2" y="606.5" width="16.8" height="157.5" fill="#3b3088"/>
<text x="484.6" y="600.1" font-size="7.5" fill="#555" text-anchor="middle">79.05</text>
<text x="555.3" y="780.4" font-size="12" fill="#666" text-anchor="middle">An...</text>
<rect x="556.8" y="609.9" width="16.8" height="154.1" fill="#3b3088"/>
<text x="565.2" y="603.5" font-size="7.5" fill="#555" text-anchor="middle">77.34</text>
<text x="636.1" y="780.4" font-size="12" fill="#666" text-anchor="middle">Ra...</text>
<rect x="637.5" y="612.7" width="16.8" height="151.3" fill="#3b3088"/>
<text x="645.9" y="606.3" font-size="7.5" fill="#555" text-anchor="middle">75.93</text>
<text x="717.0" y="780.4" font-size="12" fill="#666" text-anchor="middle">Pr...</text>
<rect x="718.1" y="524.6" width="16.8" height="239.4" fill="#3b3088"/>
<text x="726.5" y="518.2" font-size="7.5" fill="#555" text-anchor="middle">120</text>
<text x="797.9" y="780.4" font-size="12" fill="#666" text-anchor="middle">Ra...</text>
<rect x="798.7" y="720.2" width="16.8" height="43.8" fill="#3b3088"/>
<text x="807.1" y="713.8" font-size="7.5" fill="#555" text-anchor="middle">22.22</text>
<text x="878.7" y="780.4" font-size="12" fill="#666" text-anchor="middle">De...</text>
<text x="959.6" y="780.4" font-size="12" fill="#666" text-anchor="middle">Aa...</text>
<rect x="960.0" y="567.3" width="16.8" height="196.7" fill="#3b3088"/>
<text x="968.4" y="560.9" font-size="7.5" fill="#555" text-anchor="middle">98.64</text>
<rect x="457.5" y="594.7" width="16.8" height="169.3" fill="#f6921e"/>
<text x="465.9" y="588.3" font-size="7.5" fill="#555" text-anchor="middle">84.94</text>
<rect x="434" y="764" width="566" height="1" fill="#333"/>
<rect x="438" y="790" width="564" height="34" fill="#e7edfc" stroke="#d3d9ef" stroke-width="1"/>
<rect x="438" y="790" width="564" height="7" fill="#c3cbe8"/>
<rect x="717.5" y="792" width="5" height="2.4" fill="#fff" opacity=".85"/>
<rect x="435.6" y="802" width="5.400" height="17" rx="1.600" fill="#fff" stroke="#b9c1e0" stroke-width="1"/>
<rect x="998.900" y="802" width="5.400" height="17" rx="1.600" fill="#fff" stroke="#b9c1e0" stroke-width="1"/>
</svg>
<svg class="abs" style="left:1100px;top:470px" width="780" height="440" viewBox="1100 470 780 440" font-family="Liberation Sans, sans-serif">
<path d="M1490.80 529.30 A131 131 0 0 1 1583.43 567.67 L1543.83 607.27 A75 75 0 0 0 1490.80 585.30 Z" fill="#f52a04"/>
<path d="M1583.43 567.67 A131 131 0 0 1 1621.80 660.30 L1565.80 660.30 A75 75 0 0 0 1543.83 607.27 Z" fill="#e5c0a6"/>
<path d="M1621.80 660.30 A131 131 0 0 1 1583.43 752.93 L1543.83 713.33 A75 75 0 0 0 1565.80 660.30 Z" fill="#fbbc3d"/>
<path d="M1583.43 752.93 A131 131 0 0 1 1490.80 791.30 L1490.80 735.30 A75 75 0 0 0 1543.83 713.33 Z" fill="#3f3584"/>
<path d="M1490.80 791.30 A131 131 0 0 1 1359.80 660.30 L1415.80 660.30 A75 75 0 0 0 1490.80 735.30 Z" fill="#ff8c05"/>
<path d="M1359.80 660.30 A131 131 0 0 1 1490.80 529.30 L1490.80 585.30 A75 75 0 0 0 1415.80 660.30 Z" fill="#34a94b"/>
<rect x="1301.8" y="820.800" width="23.5" height="13.200" rx="3" fill="#f52a04"/><text x="1330" y="831" font-size="12" fill="#666">0-50</text>
<rect x="1362" y="820.800" width="23.5" height="13.200" rx="3" fill="#e5c0a6"/><text x="1390.5" y="831" font-size="12" fill="#666">50-60</text>
<rect x="1429" y="820.800" width="23.5" height="13.200" rx="3" fill="#fbbc3d"/><text x="1457" y="831" font-size="12" fill="#666">60-70</text>
<rect x="1495.5" y="820.800" width="23.5" height="13.200" rx="3" fill="#3f3584"/><text x="1524" y="831" font-size="12" fill="#666">70-80</text>
<rect x="1562.5" y="820.800" width="23.5" height="13.200" rx="3" fill="#ff8c05"/><text x="1590.6" y="831" font-size="12" fill="#666">80-90</text>
<rect x="1629.5" y="820.800" width="23.5" height="13.200" rx="3" fill="#34a94b"/><text x="1658.5" y="831" font-size="12" fill="#666">&gt;90</text>
</svg>


<div class="abs" style="left:1901px;top:65px;width:19px;height:857px;background:#fafafa"></div>
<div class="abs" style="left:1905px;top:88px;width:11px;height:210px;border-radius:6px;background:#8b8b8b"></div>
<svg class="abs" style="left:1903px;top:70px" width="16" height="12" viewBox="0 0 16 12"><path d="M1 9.6 L8 2.6 L15 9.6 Z" fill="#8b8b8b"/></svg>
<svg class="abs" style="left:1903px;top:907px" width="16" height="12" viewBox="0 0 16 12"><path d="M1 2.4 L8 9.4 L15 2.4 Z" fill="#8b8b8b"/></svg>
<div class="abs" style="left:1883px;top:281px;width:37px;height:45px;background:#3e3a39;border-radius:6px 0 0 6px;box-shadow:0 2px 6px rgba(0,0,0,.25)">
<svg class="abs" style="left:4px;top:8px" width="30" height="30" viewBox="-15 -15 30 30"><g fill="#eded1f" transform="rotate(-4)"><path d="M-0.6 -2.4 L-2.1 -12.6 L2.1 -12.6 L0.6 -2.4 Z" transform="rotate(0)"/><path d="M-0.6 -2.4 L-2.1 -12.6 L2.1 -12.6 L0.6 -2.4 Z" transform="rotate(45)"/><path d="M-0.6 -2.4 L-2.1 -12.6 L2.1 -12.6 L0.6 -2.4 Z" transform="rotate(90)"/><path d="M-0.6 -2.4 L-2.1 -12.6 L2.1 -12.6 L0.6 -2.4 Z" transform="rotate(135)"/><path d="M-0.6 -2.4 L-2.1 -12.6 L2.1 -12.6 L0.6 -2.4 Z" transform="rotate(180)"/><path d="M-0.6 -2.4 L-2.1 -12.6 L2.1 -12.6 L0.6 -2.4 Z" transform="rotate(225)"/><path d="M-0.6 -2.4 L-2.1 -12.6 L2.1 -12.6 L0.6 -2.4 Z" transform="rotate(270)"/><path d="M-0.6 -2.4 L-2.1 -12.6 L2.1 -12.6 L0.6 -2.4 Z" transform="rotate(315)"/></g></svg>
</div>


</div>
</body>
</html>
